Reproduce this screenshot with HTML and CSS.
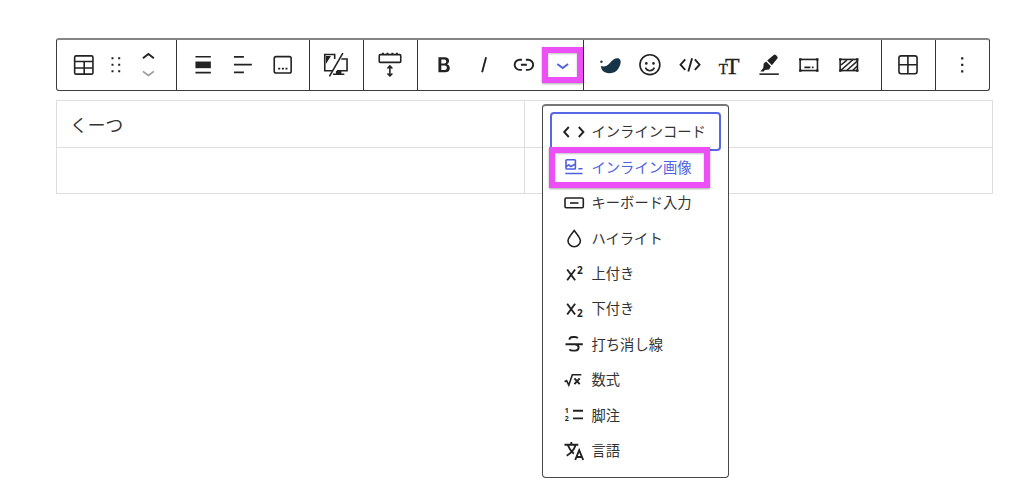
FILE: index.html
```html
<!DOCTYPE html>
<html lang="ja">
<head>
<meta charset="utf-8">
<title>ブロックエディター</title>
<link rel="stylesheet" href="styles.css">
</head>
<body>
<main class="editor">
  <div class="toolbar">
    <div class="group g-block">
      <svg class="icon" viewBox="-20 -20 40 40"><rect x="-9.3" y="-9.2" width="18.4" height="18.4" rx="1.5"/><path d="M-9-3.5H9M-9 3H9M.3-3.5V9"/></svg>
      <svg class="icon narrow" viewBox="-13 -20 26 40"><path class="solid" d="M-4.5-7.7h2v2h-2zM2.2-7.7h2v2h-2zM-4.5-1.2h2v2h-2zM2.2-1.2h2v2h-2zM-4.5 5.3h2v2h-2zM2.2 5.3h2v2h-2z"/></svg>
      <svg class="icon" viewBox="-20 -20 40 40"><path class="mid" d="M-6-6.7L-.5-11.1 5-6.7"/><path class="muted" d="M-6 6.5L-.5 10.5 5 6.5"/></svg>
    </div>
    <div class="group g-align">
      <svg class="icon" viewBox="-20 -20 40 40"><path d="M-7.5-8.3H8M-7.5 7.7H8"/><path class="solid" d="M-7.5-3.5H8V3.2H-7.5z"/></svg>
      <svg class="icon" viewBox="-20 -20 40 40"><path d="M-9-8.2H1M-9-.4H9M-9 7.4H1"/></svg>
      <svg class="icon" viewBox="-20 -20 40 40"><rect x="-8.7" y="-8.4" width="17" height="16.4" rx="1.8"/><path d="M-4.7 3.6h2M-1 3.6h2M2.6 3.6h2"/></svg>
    </div>
    <div class="group g-one">
      <svg class="icon" viewBox="-20 -20 40 40"><path d="M-3.5 5.8H-11.2V-10.6H-1.2V-6M5.5-6H11.2V5.8H1M2.5 6V9M-3 9.3H8.5"/><path class="solid" d="M-10-9h5l-5 8zM0 6h5.5v3H0z"/><path d="M7-12L-6.5 11.5"/></svg>
    </div>
    <div class="group g-one">
      <svg class="icon" viewBox="-20 -20 40 40"><rect x="-10.7" y="-10.4" width="21.6" height="7.8" rx="1"/><path d="M-8-11.4h2M-3.5-11.4h2M1.5-11.4h2M6-11.4h2M0 1.5V10.5M-2.5 3.5L0 1 2.5 3.5M-2.5 8.5L0 11 2.5 8.5"/></svg>
    </div>
    <div class="group g-format">
      <svg class="icon" viewBox="-20 -20 40 40"><path class="solid" fill-rule="evenodd" d="M-5.5-7.8H.8Q5.2-7.8 5.2-4.1 5.2-1.7 3.1-.7 5.9.2 5.9 3.2 5.9 7.3 1.2 7.3H-5.5zM-2.6-5.5V-1.6H.4Q2.4-1.6 2.4-3.6 2.4-5.5.4-5.5zM-2.6.6V5H.8Q3 5 3 2.8 3 .6.8.6z"/></svg>
      <svg class="icon" viewBox="-20 -20 40 40"><path class="mid" d="M2.2-7.8L-1.8 7.3"/></svg>
      <svg class="icon" viewBox="-20 -20 40 40"><path class="mid" d="M-2-5.3H-4.2a5.1 5.1 0 0 0 0 10.2H-2M2-5.3H4.2a5.1 5.1 0 0 1 0 10.2H2M-3-.2H3"/></svg>
      <div class="more">
        <svg class="icon blue" viewBox="-20 -20 40 40"><path class="mid" d="M-5.6-1L-.2 3 5.2-1"/></svg>
        <span class="mark"></span>
      </div>
    </div>
    <div class="group g-extra">
      <svg class="icon navy" viewBox="-20 -20 40 40"><path d="M-9.2 1C-6 2-3 1.5-.5-1.5C3-6 6-7.4 8.5-6.7C12.4-5.5 11 1 7.5 5C3.3 9.5-5 9.5-8.2 4.5z"/><circle cx="-8.5" cy="-3.3" r="1.2"/></svg>
      <svg class="icon" viewBox="-20 -20 40 40"><circle cx="0" cy="-.3" r="10"/><circle class="solid" cx="-3.6" cy="-1.6" r="1.3"/><circle class="solid" cx="3.6" cy="-1.6" r="1.3"/><path d="M-4.5 2.6C-2.5 6.8 2.5 6.8 4.5 2.6"/></svg>
      <svg class="icon" viewBox="-20 -20 40 40"><path class="mid" d="M-4.7-5.6L-9.4-.3-4.7 5M5-5.6L9.7-.3 5 5M2.2-6.8L-1.6 6.5"/></svg>
      <svg class="icon" viewBox="-20 -20 40 40"><text class="tt small" x="-10.3" y="8.7">T</text><text class="tt" x="-4" y="8.7">T</text></svg>
      <svg class="icon" viewBox="-20 -20 40 40"><path d="M-9.5 9.2H10"/><path class="solid" d="M-1.7-4.5L4.8-10Q6-11 7.2-9.8L8.4-8.5Q9.2-7.3 8.3-6.2L3 .3zM-2.7-3.5L2 1.2.3 4.5-4 4.9-5.2 6.6H-8.5L-5.7 3.1-5.2-1.5z"/></svg>
      <svg class="icon" viewBox="-20 -20 40 40"><rect x="-8.8" y="-5.6" width="17.4" height="11.2"/><path d="M-4.5 2.4h6M3 2.4h1.7"/><path class="solid" d="M-9.8-6.9h2.4v2.4h-2.4zM7.2-6.9h2.4v2.4H7.2zM-9.8 4.4h2.4v2.4h-2.4zM7.2 4.4h2.4v2.4H7.2z"/></svg>
      <svg class="icon" viewBox="-20 -20 40 40"><rect x="-8.8" y="-5.6" width="17.4" height="11.2"/><path d="M-8 0L-2-5M-8 5.3L4-5.3M-2 5.3L8.5-4M4 5.3L8.5 1"/><path class="solid" d="M-9.8-6.9h2.4v2.4h-2.4zM7.2-6.9h2.4v2.4H7.2zM-9.8 4.4h2.4v2.4h-2.4zM7.2 4.4h2.4v2.4H7.2z"/></svg>
    </div>
    <div class="group g-one">
      <svg class="icon" viewBox="-20 -20 40 40"><rect x="-9" y="-9.2" width="18.2" height="18" rx="2.2"/><path d="M0-9V9M-9-.2H9"/></svg>
    </div>
    <div class="group g-last">
      <svg class="icon" viewBox="-20 -20 40 40"><path class="solid" d="M-.8-7.8h2.2v2.2H-.8zM-.8-1.2h2.2v2.2H-.8zM-.8 5.4h2.2v2.2H-.8z"/></svg>
    </div>
  </div>

  <div class="table">
    <div class="cell">くーつ</div><div class="cell"></div>
    <div class="cell"></div><div class="cell"></div>
  </div>

  <div class="menu">
    <div class="item focused"><svg class="mi" viewBox="-12 -12 24 24"><path class="mid" d="M-5.2-5L-9.8 0-5.2 5M4.8-5L9.4 0 4.8 5"/></svg><span>インラインコード</span></div>
    <div class="item blue"><svg class="mi" viewBox="-12 -12 24 24"><rect x="-8" y="-7.2" width="9.4" height="9.2" rx=".8"/><path d="M-8-.2L-5.3-2.2-3.2-.5 1-2.8M4.4 1.8H8.5M-8.7 6.5H8.5"/></svg><span>インライン画像</span><b class="mark"></b></div>
    <div class="item"><svg class="mi" viewBox="-12 -12 24 24"><rect x="-9" y="-5" width="18.3" height="9.8" rx="1.2"/><path d="M-4 0H4.5"/></svg><span>キーボード入力</span></div>
    <div class="item"><svg class="mi" viewBox="-12 -12 24 24"><path d="M.2-7.5C3.5-3.3 6.4 0 6.4 2.7A6.2 6 0 0 1-6 2.7C-6 0-3.2-3.3.2-7.5z"/></svg><span>ハイライト</span></div>
    <div class="item"><svg class="mi" viewBox="-12 -12 24 24"><path class="mid" d="M-6.8-4.5L1.1 6.3M1.1-4.5L-6.8 6.3"/><text class="num" x="3" y="0">2</text></svg><span>上付き</span></div>
    <div class="item"><svg class="mi" viewBox="-12 -12 24 24"><path class="mid" d="M-6.8-5.3L1.1 5.5M1.1-5.3L-6.8 5.5"/><text class="num" x="3" y="8">2</text></svg><span>下付き</span></div>
    <div class="item"><svg class="mi" viewBox="-12 -12 24 24"><path class="mid" d="M-8.5.2H8.8M3.8-5.7Q3-7 1-7H-1.2Q-4.5-7-4.5-4.3M4.6 2.5V3.5Q4.6 6.6 1.2 6.6H-1Q-3.5 6.6-4.6 5.3M1 .4Q4.6.8 4.6 3.5"/></svg><span>打ち消し線</span></div>
    <div class="item"><svg class="mi" viewBox="-12 -12 24 24"><path d="M-9.4 1.7L-7.4.7-5.2 5.2-1.7-5.2H7.3"/><path class="mid" d="M.4-1.6L5.7 4.2M5.7-1.6L.4 4.2"/></svg><span>数式</span></div>
    <div class="item"><svg class="mi" viewBox="-12 -12 24 24"><path class="mid" d="M-1-4.2H9M-1 3.4H9"/><text class="tiny" x="-9.2" y="-1.7">1</text><text class="tiny" x="-9.2" y="5.8">2</text></svg><span>脚注</span></div>
    <div class="item"><svg class="mi" viewBox="-12 -12 24 24"><path class="mid" d="M-9.5-6.2H4.3M-2.7-9V-6.2M1.6-6C.2-1.5-3 2.2-7.3 4.7M-6-5.5C-4.8-2.3-2.2 1-.2 2.7M1.2 9L5.2-.8 9.2 9M2.5 6H8"/></svg><span>言語</span></div>
  </div>
</main>
</body>
</html>
```
FILE: styles.css
```css
*, *::before { box-sizing: border-box; }
body {
  margin: 0;
  width: 1024px;
  height: 500px;
  overflow: hidden;
  background: #fff;
  color: #333;
  font-family: "Noto Sans CJK JP", sans-serif;
}
.editor { position: relative; padding: 38px 31px 0 56px; }
.toolbar {
  display: flex;
  width: 934px;
  height: 53px;
  border: 1px solid #3c3c3c;
  border-top: 2px solid #858585;
  border-radius: 3px;
}
.group {
  display: flex;
  align-items: center;
  padding-left: 6px;
  border-right: 1px solid #333;
  flex-shrink: 0;
}
.g-block { width: 120px; padding-left: 6.6px; }
.g-align { width: 133px; }
.g-one { width: 54px; }
.g-format { width: 166px; }
.g-extra { width: 298px; }
.g-last { flex: 1 0 0; border-right: 0; }
svg {
  display: block;
  flex: none;
  fill: none;
  stroke: #222;
  stroke-width: 1.6;
  overflow: visible;
}
.icon { width: 39.8px; height: 40px; }
.narrow { width: 26px; }
.solid { fill: #222; stroke: none; }
.muted { stroke: #999; }
.mid { stroke-width: 1.9; }
.blue { color: #4f5fe2; stroke: #4f5fe2; }
.blue svg { stroke: #4f5fe2; }
.navy { fill: #183548; stroke: none; }
text { fill: #222; stroke: none; }
.tt { font: 24px "Liberation Serif", serif; stroke: #222; stroke-width: .3; }
.small { font-size: 15px; }
.num { font: bold 10px "Open Sans", sans-serif; }
.tiny { font: bold 7px "Open Sans", sans-serif; }
.more { position: relative; }
.mark {
  position: absolute;
  border: 6px solid #ec4ff5;
  box-shadow: 0 1px 2px rgba(0,0,0,.35), inset 0 1px 2px rgba(0,0,0,.25);
}
.more .mark { left: -1px; top: 2px; width: 41px; height: 36px; }
.table {
  display: grid;
  grid-template: 47px 46px / 468px 468px;
  width: 937px;
  margin-top: 9px;
  border: 1px solid #dedede;
  border-width: 1px 0 0 1px;
}
.cell {
  border: 1px solid #dedede;
  border-width: 0 1px 1px 0;
  padding: 0 13px;
  font-size: 17.7px;
  line-height: 47px;
}
.menu {
  position: absolute;
  left: 542px;
  top: 104px;
  width: 187px;
  height: 374px;
  padding: 9.3px 8px 0;
  background: #fff;
  border: 1px solid #484848;
  border-top: 2px solid #777;
  padding-top: 8.3px;
  border-radius: 4px;
}
.item {
  position: relative;
  display: flex;
  align-items: center;
  gap: 6px;
  height: 35.4px;
  padding-left: 11px;
  font-size: 14.3px;
  white-space: nowrap;
}
.item span { padding-bottom: 2px; margin-left: -.5px; }
.mi { width: 24px; height: 24px; }
.focused::before {
  content: "";
  position: absolute;
  left: -1px;
  top: -2px;
  width: 171px;
  height: 39px;
  border: 2px solid #5868e5;
  border-radius: 4px;
}
.item .mark { left: -2px; top: -3px; width: 161px; height: 41px; z-index: 1; }
```
